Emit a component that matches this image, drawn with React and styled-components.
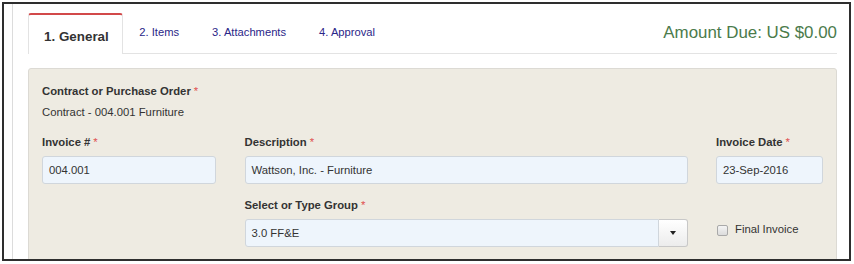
import React from "react";
import styled, { createGlobalStyle } from "styled-components";

const Global = createGlobalStyle`
  html, body { margin: 0; padding: 0; background: #fff; }
  body { font-family: "Liberation Sans", Arial, sans-serif; }
  * { box-sizing: border-box; }
`;

const Frame = styled.div`
  margin: 2px 0 0 2px;
  width: 849px;
  height: 259px;
  border: 2px solid #2e2e2e;
  overflow: hidden;
  background: #fff;
`;

const Container = styled.div`
  margin-left: 8px;
  height: 100%;
  border-left: 1px solid #dcdcdc;
  padding: 9px 12px 0 15px;
`;

const TabBar = styled.div`
  display: flex;
  align-items: flex-end;
  height: 41px;
  border-bottom: 1px solid #e3e3e3;
`;

const Tab = styled.div`
  height: ${(p) => (p.$active ? "41px" : "40px")};
  display: flex;
  align-items: center;
  padding: ${(p) => (p.$active ? "3px 13px 0 15px" : "0 16.5px 2px")};
  font-size: ${(p) => (p.$active ? "13.4px" : "11.2px")};
  font-weight: ${(p) => (p.$active ? "bold" : "normal")};
  color: ${(p) => (p.$active ? "#333" : "#2a2688")};
  background: ${(p) => (p.$active ? "#fff" : "transparent")};
  border: ${(p) => (p.$active ? "1px solid #e3e3e3" : "none")};
  border-top: ${(p) => (p.$active ? "2px solid #d2494a" : "none")};
  border-bottom: none;
  border-radius: 3px 3px 0 0;
  margin-bottom: ${(p) => (p.$active ? "-1px" : "0")};
`;

const Amount = styled.div`
  margin-left: auto;
  align-self: center;
  font-size: 16.9px;
  color: #4b7b4b;
  margin-top: 0;
`;

const Panel = styled.div`
  margin-top: 14px;
  height: 220px;
  background: #eeebe2;
  border: 1px solid #dcdad4;
  border-radius: 3px 3px 0 0;
  padding: 15px 13px 0 13px;
`;

const Label = styled.div`
  font-size: 11.3px;
  line-height: 14px;
  font-weight: bold;
  color: #333;
  white-space: nowrap;
`;

const Req = styled.span`
  color: #e05050;
  font-weight: normal;
  margin-left: 3px;
`;

const Static = styled.div`
  font-size: 11.3px;
  line-height: 14px;
  color: #333;
  margin-top: 7px;
`;

const Grid = styled.div`
  display: grid;
  grid-template-columns: 174px 443px 107px;
  column-gap: 28.5px;
  margin-top: 16px;
`;

const Field = styled.div`
  display: flex;
  flex-direction: column;
  gap: 7px;
  grid-column: ${(p) => p.$col || "auto"};
  margin-top: ${(p) => p.$mt || 0}px;
`;

const Input = styled.div`
  height: 28px;
  background: #eef5fc;
  border: 1px solid #d0d6dc;
  border-radius: ${(p) => (p.$joined ? "3px 0 0 3px" : "3px")};
  display: flex;
  align-items: center;
  padding-left: 6px;
  font-size: 11.3px;
  color: #333;
  flex: ${(p) => (p.$joined ? "1" : "none")};
`;

const Combo = styled.div`
  display: flex;
  height: 28px;
`;

const DropBtn = styled.div`
  width: 29px;
  height: 28px;
  border: 1px solid #c8c8c8;
  border-left: none;
  border-radius: 0 3px 3px 0;
  background: linear-gradient(#ffffff, #ececec);
  display: flex;
  align-items: center;
  justify-content: center;
`;

const Caret = styled.span`
  width: 0;
  height: 0;
  border-left: 3.5px solid transparent;
  border-right: 3.5px solid transparent;
  border-top: 4px solid #222;
`;

const CheckRow = styled.div`
  display: flex;
  align-items: center;
  gap: 7px;
  height: 20px;
  margin-top: 21px;
  padding-left: 1px;
  font-size: 11.3px;
  color: #333;
`;

const Box = styled.span`
  width: 11px;
  height: 11px;
  border: 1px solid #a9a9a9;
  border-radius: 2px;
  background: linear-gradient(#f4f4f4, #dcdcdc);
  margin-top: 2px;
`;

export default function App() {
  return (
    <>
      <Global />
      <Frame>
        <Container>
          <TabBar>
            <Tab $active>1. General</Tab>
            <Tab>2. Items</Tab>
            <Tab>3. Attachments</Tab>
            <Tab>4. Approval</Tab>
            <Amount>Amount Due: US $0.00</Amount>
          </TabBar>
          <Panel>
            <Label>
              Contract or Purchase Order<Req>*</Req>
            </Label>
            <Static>Contract - 004.001 Furniture</Static>
            <Grid>
              <Field>
                <Label>
                  Invoice #<Req>*</Req>
                </Label>
                <Input>004.001</Input>
              </Field>
              <Field>
                <Label>
                  Description<Req>*</Req>
                </Label>
                <Input>Wattson, Inc. - Furniture</Input>
              </Field>
              <Field>
                <Label>
                  Invoice Date<Req>*</Req>
                </Label>
                <Input>23-Sep-2016</Input>
              </Field>
              <Field $col="2" $mt={14}>
                <Label>
                  Select or Type Group<Req>*</Req>
                </Label>
                <Combo>
                  <Input $joined>3.0 FF&amp;E</Input>
                  <DropBtn>
                    <Caret />
                  </DropBtn>
                </Combo>
              </Field>
              <Field $mt={14}>
                <CheckRow>
                  <Box />
                  Final Invoice
                </CheckRow>
              </Field>
            </Grid>
          </Panel>
        </Container>
      </Frame>
    </>
  );
}
